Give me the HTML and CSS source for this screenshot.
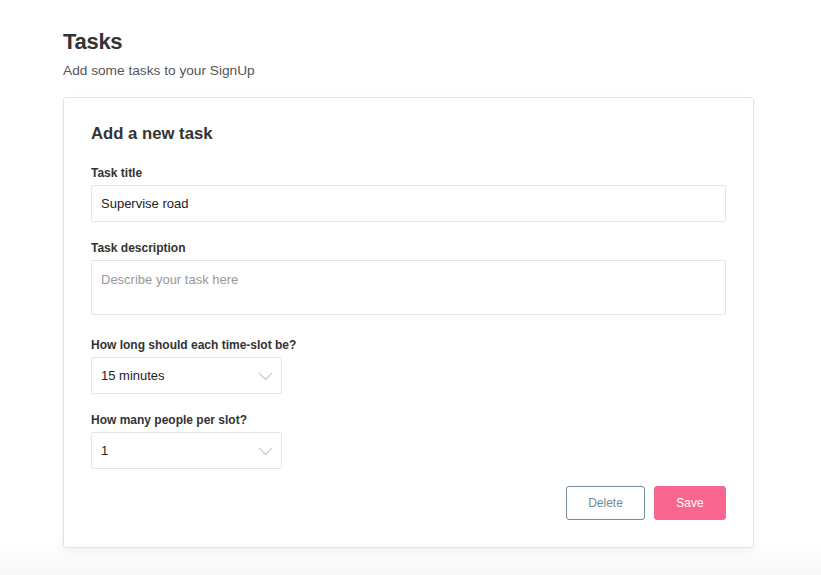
FILE: index.html
```html
<!DOCTYPE html>
<html>
<head>
  <link rel="stylesheet" href="styles.css">
</head>
<body>

<div class="page">
  <h1 class="page-title">Tasks</h1>
  <p class="page-sub">Add some tasks to your SignUp</p>

  <form class="card" onsubmit="return false">
    <h2 class="card-title">Add a new task</h2>

    <div class="field">
      <label for="title">Task title</label>
      <input type="text" id="title" value="Supervise road">
    </div>

    <div class="field field-wide">
      <label for="desc">Task description</label>
      <textarea id="desc" placeholder="Describe your task here"></textarea>
    </div>

    <div class="field">
      <label for="slot">How long should each time-slot be?</label>
      <div class="select-wrap">
        <select id="slot">
          <option>15 minutes</option>
          <option>30 minutes</option>
          <option>1 hour</option>
        </select>
        <!-- chevron sits over the native select -->
        <svg class="chevron" width="15" height="9" viewBox="0 0 15 9"><path d="M1 1l6.5 6.5L14 1" fill="none" stroke="#cfcfcf" stroke-width="1.3"/></svg>
      </div>
    </div>

    <div class="field field-last">
      <label for="people">How many people per slot?</label>
      <div class="select-wrap">
        <select id="people">
          <option>1</option>
          <option>2</option>
          <option>3</option>
        </select>
        <svg class="chevron" width="15" height="9" viewBox="0 0 15 9"><path d="M1 1l6.5 6.5L14 1" fill="none" stroke="#cfcfcf" stroke-width="1.3"/></svg>
      </div>
    </div>

    <div class="actions">
      <button type="button" class="btn btn-outline">Delete</button>
      <button type="submit" class="btn btn-save">Save</button>
    </div>
  </form>
</div>

</body>
</html>
```

FILE: styles.css
```css
body {
  margin: 0;
  font-family: "Liberation Sans", Arial, sans-serif;
  color: #333;
}

/* Page wrapper with the faint grey fade at the bottom */
.page {
  min-height: 575px;
  box-sizing: border-box;
  padding: 29px 0 0 63px;
  background: linear-gradient(to bottom, #fff 540px, #f7f7f7 575px);
}

.page-title {
  margin: 0;
  font-size: 22px;
  line-height: 26px;
  font-weight: bold;
  color: #333;
  letter-spacing: -0.3px;
}

.page-sub {
  margin: 7px 0 0;
  font-size: 13.7px;
  line-height: 18px;
  color: #555;
}

/* Form card */
.card {
  width: 691px;
  box-sizing: border-box;
  margin-top: 17px;
  padding: 26px 27px 27px;
  background: #fff;
  border: 1px solid #e2e2e2;
  border-radius: 3px;
  box-shadow: 0 3px 10px rgba(0, 0, 0, 0.05);
}

.card-title {
  margin: 0 0 21px;
  font-size: 16.7px;
  line-height: 20px;
  font-weight: bold;
  color: #333;
}

.field {
  margin-bottom: 18px;
}

.field-wide {
  margin-bottom: 22px;
}

.field-last {
  margin-bottom: 17px;
}

.field label {
  display: block;
  padding-top: 1px;
  margin-bottom: 4px;
  font-size: 12px;
  line-height: 15px;
  font-weight: bold;
  color: #333;
}

.field input,
.field textarea,
.field select {
  display: block;
  width: 100%;
  box-sizing: border-box;
  border: 1px solid #e6e6e6;
  border-radius: 2px;
  background: #fff;
  font-family: inherit;
  font-size: 13px;
  color: #222;
  outline: none;
}

.field input {
  height: 37px;
  padding: 0 9px;
}

.field textarea {
  height: 55px;
  padding: 11px 9px;
  resize: none;
}

.field textarea::placeholder {
  color: #999;
}

.select-wrap {
  position: relative;
  width: 191px;
}

.field select {
  height: 37px;
  padding: 0 9px;
  -webkit-appearance: none;
  appearance: none;
}

.chevron {
  position: absolute;
  right: 9px;
  top: 15px;
  pointer-events: none;
}

/* Buttons */
.actions {
  display: flex;
  justify-content: flex-end;
  gap: 9px;
}

.btn {
  height: 34px;
  border-radius: 3px;
  font-family: inherit;
  font-size: 12px;
  cursor: pointer;
}

.btn-outline {
  width: 79px;
  background: #fff;
  border: 1px solid #6f8c99;
  color: #6f8c99;
}

.btn-save {
  width: 72px;
  background: #f8668f;
  border: 1px solid #f8668f;
  color: #fff;
}
```
